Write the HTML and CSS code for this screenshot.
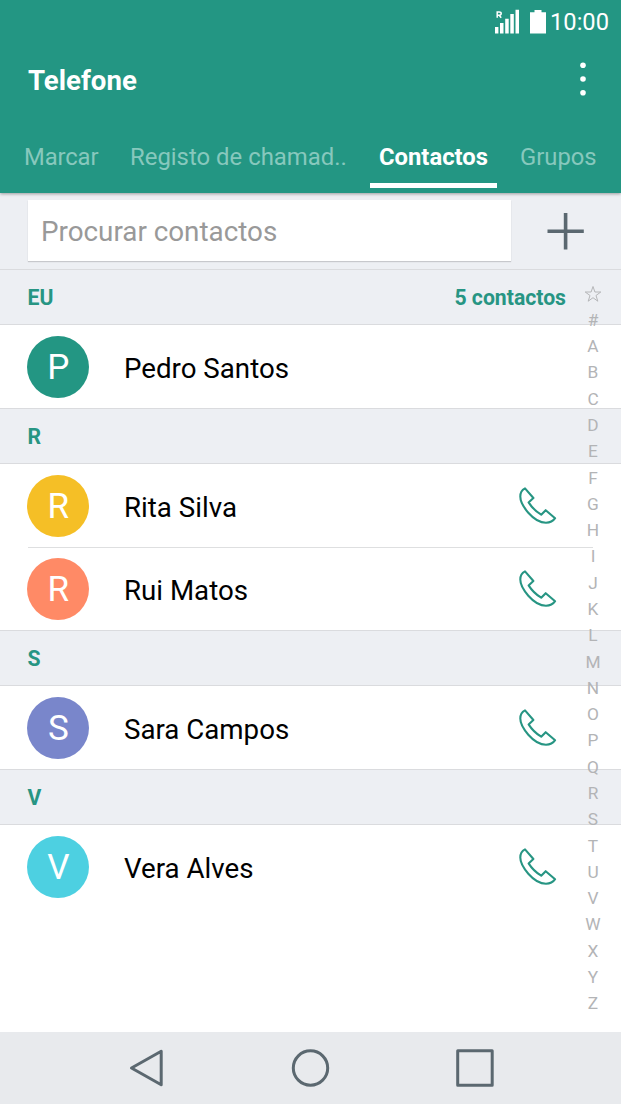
FILE: index.html
```html
<!DOCTYPE html>
<html lang="pt">
<head>
<meta charset="utf-8">
<title>Telefone</title>
<link rel="stylesheet" href="styles.css">
</head>
<body>
<svg class="defs" aria-hidden="true">
  <symbol id="phone" viewBox="0 0 40 40">
    <path d="M7 2.400 L15.400 12 L10.600 16.400 C13.500 21 18 25.600 23.200 28.700 L27.700 24.200 L37.100 32.200 C35 35.300 31.500 36.700 28 36.700 C21.500 36.700 15 32 10.300 26.700 C5.300 21 2.300 15.500 2.300 10.600 C2.300 6.500 4.300 3.700 7 2.400 Z" fill="none" stroke="#279583" stroke-width="2.100" stroke-linejoin="round"/>
  </symbol>
</svg>
<div class="screen">
  <header class="header">
    <div class="status">
      <svg class="status-icons" width="54" height="28" viewBox="0 0 54 28" fill="#fff">
        <path d="M1 20h3.400v6.500H1zM6 16h3.500v10.500H6zM11.200 11.800h3.500v14.700h-3.500zM16.300 7h3.500v19.500h-3.500zM21.500 2.800h3.500v23.700h-3.500z"/>
        <path d="M40.500 3h7v2.200h4.500v21.300H36V5.200h4.500z"/>
        <path d="M3.200 10.700V5h2q2 0 2 1.600t-2 1.600h-2m2 0 2 2.500" fill="none" stroke="#fff" stroke-width="1.500"/>
      </svg>
      <span class="time">10:00</span>
    </div>
    <div class="titlebar">
      <h1 class="title">Telefone</h1>
      <svg class="more" width="8" height="36" viewBox="0 0 8 36" fill="#fff"><circle cx="4" cy="4.200" r="2.800"/><circle cx="4" cy="18" r="2.800"/><circle cx="4" cy="31.700" r="2.800"/></svg>
    </div>
    <nav class="tabs">
      <span class="tab tab-dial">Marcar</span>
      <span class="tab tab-log">Registo de chamad..</span>
      <span class="tab tab-active">Contactos</span>
      <span class="tab tab-groups">Grupos</span>
    </nav>
  </header>
  <div class="search">
    <div class="field">Procurar contactos</div>
    <svg class="add" width="38" height="38" viewBox="0 0 38 38"><path d="M18.600 2.800v32.800M2.300 19.200h32.700" stroke="#5b6870" stroke-width="3.600" stroke-linecap="square" fill="none"/></svg>
  </div>
  <main class="list">
    <div class="section"><span>EU</span><span class="count">5 contactos</span></div>
    <div class="row"><span class="avatar green">P</span><span class="name">Pedro Santos</span></div>
    <div class="section">R</div>
    <div class="row"><span class="avatar yellow">R</span><span class="name">Rita Silva</span><svg class="call"><use href="#phone"/></svg></div>
    <div class="row divided"><span class="avatar orange">R</span><span class="name">Rui Matos</span><svg class="call"><use href="#phone"/></svg></div>
    <div class="section">S</div>
    <div class="row"><span class="avatar indigo">S</span><span class="name">Sara Campos</span><svg class="call"><use href="#phone"/></svg></div>
    <div class="section">V</div>
    <div class="row"><span class="avatar cyan">V</span><span class="name">Vera Alves</span><svg class="call"><use href="#phone"/></svg></div>
    <div class="index">
      <svg width="18" height="18" viewBox="0 0 18 18"><path d="M9 1.500 10.900 7H16.800L12 10.500 13.800 16.200 9 12.700 4.200 16.200 6 10.500 1.200 7H7.100Z" fill="none" stroke="#b5b6b8" stroke-width="1"/></svg>
      <span>#</span><span>A</span><span>B</span><span>C</span><span>D</span><span>E</span><span>F</span><span>G</span><span>H</span><span>I</span><span>J</span><span>K</span><span>L</span><span>M</span><span>N</span><span>O</span><span>P</span><span>Q</span><span>R</span><span>S</span><span>T</span><span>U</span><span>V</span><span>W</span><span>X</span><span>Y</span><span>Z</span>
    </div>
  </main>
  <footer class="navbar">
    <svg width="40" height="40" viewBox="0 0 40 40"><path d="M35.200 3.200V36.800L5.500 20Z"/></svg>
    <svg width="40" height="40" viewBox="0 0 40 40"><circle cx="19.500" cy="20" r="17.200"/></svg>
    <svg width="40" height="40" viewBox="0 0 40 40"><path d="M2.700 2.700H37.200V37.200H2.700Z"/></svg>
  </footer>
</div>
</body>
</html>
```
FILE: styles.css
```css
* { box-sizing: border-box; }
body { margin: 0; font-family: Roboto, "Liberation Sans", sans-serif; background: #fff; }
.defs { display: none; }
.screen { display: flex; flex-direction: column; width: 621px; height: 1104px; overflow: hidden; white-space: nowrap; }

.header { flex: none; display: flex; flex-direction: column; height: 193px; background: #239683; color: #fff; position: relative; box-shadow: 0 1px 3px rgba(0, 0, 0, .35); }
.status { display: flex; justify-content: flex-end; align-items: center; height: 43px; padding-right: 12px; }
.status-icons { margin-top: -8px; margin-bottom: -6px; }
.time { font-size: 23.7px; line-height: 28px; margin-left: 2px; }
.titlebar { display: flex; justify-content: space-between; align-items: center; height: 74px; padding: 0 34px 0 28px; }
.title { margin: 2px 0 0; font-size: 27.6px; line-height: 32px; font-weight: 700; }
.more { margin-top: -2px; }
.tabs { display: flex; height: 71px; padding-left: 24px; font-size: 23.8px; line-height: 30px; color: #87c8bd; }
.tab { padding-top: 25px; }
.tab-dial { width: 106px; letter-spacing: -.1px; }
.tab-log { width: 240px; font-size: 23.9px; }
.tab-active { width: 127px; height: 71px; text-align: center; font-weight: 700; color: #fff; background: linear-gradient(#fff, #fff) 0 66px / 100% 5px no-repeat; }
.tab-groups { margin-left: 23px; }

.search { flex: none; display: flex; align-items: flex-start; height: 76px; padding: 7px 0 0 28px; background: #edeff3; }
.field { width: 483px; height: 61px; padding-left: 13px; background: #fff; box-shadow: 0 1px 1px rgba(0, 0, 0, .16); color: #999; font-size: 27.8px; line-height: 63px; }
.add { margin: 12px 0 0 36px; }

.list { flex: 1; position: relative; background: #fff; }
.section { display: flex; justify-content: space-between; height: 56px; padding: 0 55px 0 27.5px; border-top: 1px solid #dadbde; border-bottom: 1px solid #dadbde; background: #edeff3; color: #279583; font-size: 21.2px; line-height: 56px; font-weight: 700; }
.row { display: flex; align-items: center; height: 83px; padding: 0 63px 0 27.4px; position: relative; color: #000; font-size: 27.7px; }
.divided::before { content: ""; position: absolute; top: 0; left: 28px; right: 28px; height: 1px; background: #dedfe0; }
.avatar { display: block; width: 62px; height: 62px; border-radius: 50%; color: #fff; font-size: 35px; line-height: 64px; text-align: center; }
.green { background: #239683; }
.yellow { background: #f5bf26; }
.orange { background: #ff8a66; }
.indigo { background: #7986cb; }
.cyan { background: #4dd0e1; }
.name { margin-left: 34.6px; padding-top: 3px; flex: 1; }
.call { width: 40px; height: 40px; }
.index { position: absolute; top: 11.5px; right: 14px; width: 28px; height: 736px; display: grid; grid-template-rows: repeat(28, 1fr); justify-items: center; align-items: center; color: #b3b4b6; font-size: 17.3px; line-height: 26px; }

.navbar { flex: none; display: flex; justify-content: space-between; align-items: center; height: 72px; padding: 0 126px 0 126px; background: #e8eaed; }
.navbar svg { fill: none; stroke: #5b6870; stroke-width: 3; stroke-linejoin: round; }
```
